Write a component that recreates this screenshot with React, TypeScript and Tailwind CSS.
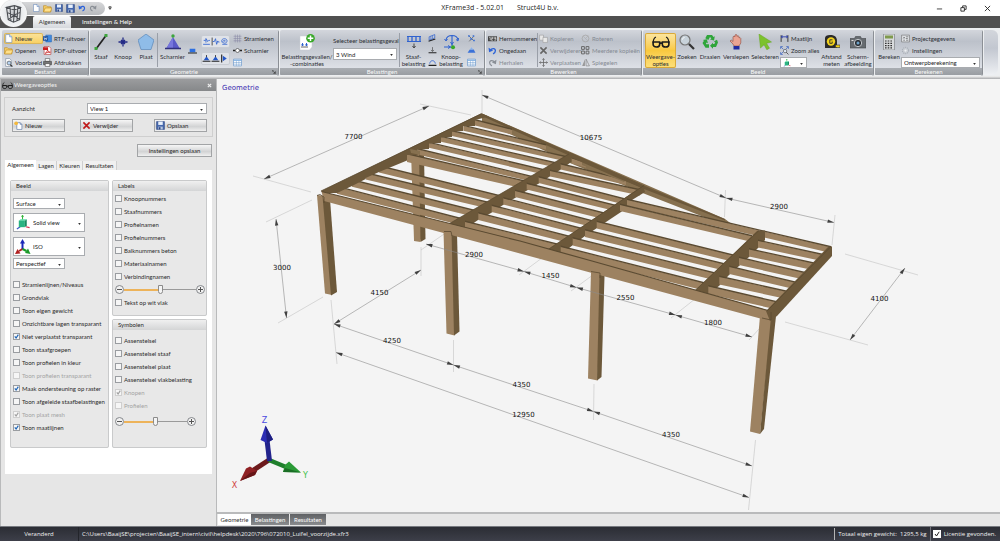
import type { ReactNode } from "react";

type Pt = [number, number];

const pts = (...p: Pt[]) => p.map((q) => q.join(",")).join(" ");

function Icon({ children, className = "h-[10px] w-[10px]" }: { children: ReactNode; className?: string }) {
  return (
    <svg viewBox="0 0 16 16" className={`${className} shrink-0`} fill="none" aria-hidden="true">
      {children}
    </svg>
  );
}

const NewDoc = () => (
  <>
    <path d="M3 1h7l4 4v10H3z" fill="#fff" stroke="#5a7fb5" />
    <path d="M10 1v4h4" fill="#cfe0f5" stroke="#5a7fb5" />
  </>
);
const Folder = () => (
  <>
    <path d="M1 3h5l2 2h6v9H1z" fill="#f7cf6b" stroke="#b98518" />
    <path d="M4 7h12l-3 7H1z" fill="#ffe08a" stroke="#b98518" />
  </>
);
const Disk = () => (
  <>
    <path d="M1 1h14v14H1z" fill="#4668ad" stroke="#2d4680" />
    <path d="M4 1h8v6H4z" fill="#e8f0fb" />
    <path d="M4 10h8v5H4z" fill="#b8c6de" />
    <path d="M5 11h3v4H5z" fill="#2d4680" />
  </>
);
const Undo = () => (
  <>
    <path d="M4 8C7 3 14 4 13 9c0 2-2 4-4 5" stroke="#2c62d8" strokeWidth="2.4" />
    <path d="M1 3l1 8 7-3z" fill="#2c62d8" />
  </>
);
const Redo = () => (
  <>
    <path d="M12 8C9 3 2 4 3 9c0 2 2 4 4 5" stroke="#8a8f96" strokeWidth="2.2" />
    <path d="M15 3l-1 8-7-3z" fill="#8a8f96" />
  </>
);
const Word = () => (
  <>
    <path d="M5 2h10v12H5z" fill="#3f8be0" stroke="#2566b5" />
    <path d="M0 4h9v8H0z" fill="#1c4f9c" />
    <path d="M2 6l1 4 1.500-3L6 10l1-4" stroke="#fff" />
  </>
);
const Pdf = () => (
  <>
    <path d="M2 1h9l3 3v11H2z" fill="#fff" stroke="#b02020" />
    <path d="M0 2h9v5H0z" fill="#c92020" />
    <path d="M4 13c3-2 4-5 4-6 1 3 3 4 5 4-4 0-7 1-9 2z" stroke="#c92020" strokeWidth="1.500" />
  </>
);
const Preview = () => (
  <>
    <path d="M3 1h7l3 3v11H3z" fill="#fff" stroke="#6b7c93" />
    <circle cx="9" cy="9" r="3.500" fill="#b7d4f2" stroke="#333" />
    <path d="M11 12l4 3" stroke="#333" strokeWidth="2" />
  </>
);
const Printer = () => (
  <>
    <path d="M4 1h8v5H4z" fill="#fff" stroke="#444" />
    <path d="M1 6h14v6H1z" fill="#777" stroke="#333" />
    <path d="M4 10h8v5H4z" fill="#fff" stroke="#444" />
  </>
);
const BarMember = () => (
  <>
    <path d="M3 15L13 1.500" stroke="#222" strokeWidth="1.700" />
    <path d="M1.500 13h3v3h-3zM11.500 0h3v3h-3z" fill="#3da53d" />
  </>
);
const Node = () => <path d="M8 3.500v9M3.500 8h9M6 6l4 4M10 6l-4 4" stroke="#232a86" strokeWidth="1.300" />;
const Plate = () => <path d="M8 0l8 6-3 9.500H3L0 6z" fill="#8fbce8" stroke="#5c88b8" strokeWidth=".7" />;
const Hinge = () => (
  <>
    <path d="M8 3L1.500 14h13z" fill="#5a5ac8" />
    <path d="M8 3v11H1.500z" fill="#7676dd" />
    <path d="M0 14.500h16" stroke="#30307c" strokeWidth="1.500" />
    <circle cx="8" cy="2" r="1.700" fill="#3da53d" />
  </>
);
const Support = () => (
  <>
    <path d="M3 5h10v6H3z" fill="#2d6fe0" />
    <path d="M0 12.500h16" stroke="#222" strokeWidth="1.800" />
  </>
);
const Spring = () => <path d="M2 13h12M7 2v8M3 6h3l2-2 2 4 2-2h2" stroke="#2f62cf" strokeWidth="1.500" />;
const Spring2 = () => (
  <>
    <path d="M2 1v14" stroke="#333" strokeWidth="1.500" />
    <path d="M3 8h3l2-5 2 10 2-6 1 2h2" stroke="#2f62cf" strokeWidth="1.500" />
  </>
);
const Spiral = () => (
  <path d="M13 13H4M8 8c2 0 2-2 0-2-4 0-4 5 0 5 6 0 6-8 0-8C3 3 2 7 4 10" stroke="#2f62cf" strokeWidth="1.400" />
);
const TriSupport = () => (
  <>
    <path d="M8 4l5 7H3z" fill="#2256c8" />
    <path d="M1 13h14M8 2v3" stroke="#222" strokeWidth="1.800" />
  </>
);
const SideSupport = () => (
  <>
    <path d="M3 1v14" stroke="#222" strokeWidth="2" />
    <path d="M5 3l7 5-7 5z" fill="#2256c8" />
  </>
);
const Grid = () => <path d="M1 4h14M1 8h14M1 12h14M4 1v14M8 1v14M12 1v14" stroke="#8a8aa6" />;
const HingeLine = () => (
  <>
    <path d="M0 8h4M12 8h4" stroke="#222" strokeWidth="3" />
    <circle cx="8" cy="8" r="3.500" fill="#fff" stroke="#222" />
  </>
);
const TableIcon = () => (
  <>
    <path d="M1 2h14v12H1z" fill="#fff" stroke="#4d86c4" />
    <path d="M1 3h14v2H1z" fill="#6fa6de" />
    <path d="M1 8h14M1 11h14M6 5v9M10.500 5v9" stroke="#4d86c4" strokeWidth=".7" />
  </>
);
const LoadCase = () => (
  <>
    <path d="M1 2h12v11l-2.500 3H1z" fill="#fff" stroke="#c8ccd2" strokeWidth=".5" />
    <path d="M3.500 9v3M7.500 9v3M2.500 10.500l1 1.500 1-1.500M6.500 10.500l1 1.500 1-1.500" stroke="#2f62cf" strokeWidth="1" />
    <path d="M2 13h7" stroke="#222" strokeWidth=".7" />
    <circle cx="11.500" cy="4.300" r="4.300" fill="#38a828" />
    <path d="M11.500 1.500v5.600M8.700 4.300h5.600" stroke="#fff" strokeWidth="1.500" />
  </>
);
const LineLoad = () => (
  <>
    <path d="M1 2.500h14M1 7.500h14" stroke="#2f62cf" />
    <path d="M2 2v5M6 2v5M10 2v5M14 2v5" stroke="#2f62cf" strokeWidth="1.300" />
    <path d="M8 9.500v4M6.500 12l1.500 2 1.500-2" stroke="#444" />
  </>
);
const AreaLoad = () => (
  <>
    <path d="M2 5l10-4v6L2 11z" stroke="#2f62cf" strokeWidth="1.300" />
    <path d="M5 4v6M8 3v5" stroke="#2f62cf" />
    <path d="M1 13l12-4" stroke="#222" strokeWidth="2" />
  </>
);
const PointLoad = () => (
  <>
    <path d="M8 2v7M5.500 7L8 10l2.500-3" stroke="#555" strokeWidth="1.300" />
    <path d="M1 12h14" stroke="#222" strokeWidth="2" />
  </>
);
const Moment = () => (
  <>
    <path d="M3 10c1-7 9-7 10 0" stroke="#2f62cf" strokeWidth="1.500" />
    <path d="M1 13h14" stroke="#222" strokeWidth="2" />
  </>
);
const NodeLoad = () => (
  <>
    <path d="M3 6c1-6 11-6 12 0M9 2v10M1 13h7" stroke="#2f62cf" strokeWidth="1.100" />
    <path d="M7.500 8l1.500 2.500 1.500-2.500M15.500 4l-.5 3-2-1.500M1.500 5L3 7l1.500-2M5 11.500L7.500 13 5 14.500" stroke="#2f62cf" />
    <circle cx="10" cy="13.300" r="2" fill="#38a828" />
  </>
);
const Scatter = () => (
  <>
    <path d="M3 3l9 9M12 4L4 13" stroke="#333" />
    <path d="M2 2h3v3H2zM10 2h3v3h-3zM11 10h3v3h-3zM6 7h3v3H6z" fill="#3b72d8" />
  </>
);
const Mass = () => (
  <>
    <path d="M1 12h14l-3-6H5z" fill="#3b72d8" />
    <path d="M8 2l3 4H5z" fill="#87b1ee" />
  </>
);
const Renumber = () => (
  <>
    <path d="M0 4h16v9H0z" fill="#444" />
    <path d="M2 6h2v5M6 6h3v2H6v3h3M11 6h3v5h-3M11 8h3" stroke="#fff" />
  </>
);
const Copy = () => (
  <>
    <path d="M1 2h7v9H1z" fill="#e8e8e8" stroke="#999" />
    <path d="M7 6h8v9H7z" fill="#e8e8e8" stroke="#999" />
  </>
);
const Cross = ({ c }: { c: string }) => <path d="M2.500 2.500l11 11M13.500 2.500l-11 11" stroke={c} strokeWidth="2.800" />;
const Move = () => (
  <path d="M8 1v14M1 8h14M6 3l2-2 2 2M6 13l2 2 2-2M3 6L1 8l2 2M13 6l2 2-2 2" stroke="#666" strokeWidth="1.400" />
);
const Rotate = () => (
  <>
    <circle cx="8" cy="8" r="6" stroke="#aaa" strokeWidth="1.500" />
    <path d="M4 4l8 8M8 8l5-5" stroke="#aaa" />
  </>
);
const Multi = () => <path d="M1 1h5v5H1zM9 1h5v5H9zM1 9h5v5H1zM9 9h5v5H9z" stroke="#666" strokeWidth="1.700" />;
const Mirror = () => (
  <>
    <path d="M7 2v12H2z" fill="#999" />
    <path d="M9 2v12h6z" stroke="#777" />
  </>
);
const Glasses = () => (
  <>
    <path d="M1 9c0-2.500.5-4.500 2.500-5.500M15 9c0-2.500-.5-4.500-2.500-5.500" stroke="#1a1a1a" strokeWidth="1.100" />
    <path d="M1 8h5.800v2.200c0 1.200-1 2.300-2.900 2.300S1 11.400 1 10.200zM9.200 8H15v2.200c0 1.200-1 2.300-2.900 2.300s-2.900-1.100-2.900-2.300zM6.800 9h2.400" stroke="#1a1a1a" strokeWidth="1.400" />
  </>
);
const Magnifier = () => (
  <>
    <circle cx="6" cy="6" r="5" fill="#c8d2da" stroke="#777" strokeWidth="1.200" />
    <path d="M10 10l5 5" stroke="#333" strokeWidth="2.200" />
    <path d="M3.500 5.500c0-1 1-2 2-2" stroke="#fff" />
  </>
);
const Recycle = () => (
  <g fill="#2fa53a">
    <path d="M5 1h5l1.500 2 1.300-.8-.8 4.300-4-1 1.300-.9L8 3 6.300 6 3.300 4.200z" />
    <path d="M12 7.300l3-1.500 1 2.700-2 4.500h-3v1.800L8 11.800l3-3V10h1.300l.9-1.500z" />
    <path d="M7 10.200v3.600H3.500L.5 9 2 6.700.8 6l4-.8L6 9.200 4.600 8.500l-.7 1.200.4.500z" />
  </g>
);
const Hand = () => (
  <>
    <path d="M5 10L2 7l1.200-1L5 7.500V2.800l1-.7L7 2.800V1l1-.6L9 1v1.500l1-.8 1 .8V4l1-.5.8 1v4.500L11 12H6z" fill="#eba493" stroke="#8e4b40" strokeWidth=".6" />
    <path d="M5.500 12h6v3.500h-6z" fill="#232aa0" />
  </>
);
const Cursor = () => <path d="M2 0l12.500 8-5 1.200 3 5-2.700 1.500-2.700-5L3.500 14z" fill="#7cc22e" stroke="#67a722" strokeWidth=".5" />;
const DimLine = () => (
  <>
    <path d="M2 2v12M14 2v12" stroke="#222" strokeWidth="1.500" />
    <path d="M2 5h12M5 3L2 5l3 2M11 3l3 2-3 2" stroke="#2f3fa8" strokeWidth="1.600" />
  </>
);
const ZoomAll = () => (
  <>
    <path d="M2 2l4 4M14 2l-4 4M2 14l4-4M1 5V1h4M11 1h4v4M1 11v4h4" stroke="#3a63c0" strokeWidth="1.300" />
    <circle cx="9" cy="9" r="3" fill="#dce8f5" stroke="#444" />
    <path d="M11 11l4 4" stroke="#444" strokeWidth="1.500" />
  </>
);
const Tape = () => (
  <>
    <path d="M1 4c0-2 2-3 5-3 4 0 7 1.500 7 6v7H1z" fill="#2b2b2b" />
    <circle cx="7" cy="7.500" r="4.200" fill="#f2d21c" />
    <path d="M8.500 5.800H5.800v3.500h2.400V7.500" stroke="#2b2b2b" strokeWidth=".9" />
    <path d="M11.500 11h4.500v2.500h-4.500z" fill="#f2d21c" stroke="#333" strokeWidth=".6" />
  </>
);
const Camera = () => (
  <>
    <path d="M0 4.500h4.500l1-2h5l1 2H16V14H0z" fill="#666b70" stroke="#44484c" strokeWidth=".6" />
    <circle cx="8" cy="9" r="3.700" fill="#2c3035" stroke="#c4c8cc" />
    <circle cx="8" cy="9" r="1.500" fill="#6da2c9" />
    <path d="M1.500 6.500h2" stroke="#ddd" />
  </>
);
const Calc = () => (
  <>
    <path d="M2.500 0h11v16h-11z" fill="#d8dadc" stroke="#8c8f93" strokeWidth=".8" />
    <path d="M4 1.500h8v3H4z" fill="#7f9a4e" />
    <path d="M4 7h8M4 9.300h8M4 11.600h8M4 13.900h8" stroke="#333" strokeWidth="1.200" strokeDasharray="1.600 1.100" />
  </>
);
const Settings = () => (
  <>
    <circle cx="8" cy="8" r="5.500" fill="#c9cdd3" stroke="#aab0b8" strokeWidth="2" strokeDasharray="2 1.500" />
    <circle cx="8" cy="8" r="2" fill="#eef0f3" />
  </>
);
const Project = () => (
  <>
    <path d="M1 2h14v12H1z" fill="#e3e6ea" stroke="#666" />
    <path d="M4 5l3 3M4 8l3-3M4 11h3M9 5h4M9 8h3M9 11h4" stroke="#555" strokeWidth="1.200" />
  </>
);
const Cube = () => (
  <>
    <path d="M5 12.500l-3.500 2.500" stroke="#3b55c8" strokeWidth="1.200" />
    <path d="M7.500 5V.5M6.500 2l1-1.500 1 1.500" stroke="#37b43c" strokeWidth="1.100" />
    <path d="M11 12.500l4 1" stroke="#d02c4c" strokeWidth="1.200" />
    <path d="M3.500 6l2-1.500H12l-2 1.500z" fill="#5adba6" />
    <path d="M3.500 6H10v7H3.500z" fill="#2bb382" />
    <path d="M10 6l2-1.500V11l-2 2z" fill="#1b8a62" />
  </>
);
const IsoAxes = () => (
  <>
    <path d="M7.500 10V4" stroke="#1c28b8" strokeWidth="2" />
    <path d="M7.500 0L5 4.500h5z" fill="#1c28b8" />
    <path d="M7.500 10l-3.500 2" stroke="#b02020" strokeWidth="2" />
    <path d="M0 15l2.500-5 3 4.500z" fill="#b02020" />
    <path d="M7.500 10l4 2" stroke="#1d9a2a" strokeWidth="2" />
    <path d="M15.500 15l-5.500-1 3-4.500z" fill="#1d9a2a" />
  </>
);
const NewStar = () => (
  <>
    <path d="M5 3h6l3 3v9H5z" fill="#fff" stroke="#48679c" />
    <path d="M11 3v3h3" stroke="#48679c" />
    <circle cx="3.800" cy="4" r="3.300" fill="#f5b93c" />
  </>
);

function Caret({ className = "" }: { className?: string }) {
  return (
    <svg viewBox="0 0 4 3" className={`pointer-events-none absolute h-[2px] w-[3px] ${className}`} aria-hidden="true">
      <path d="M0 0h4L2 3z" fill="#333" />
    </svg>
  );
}

function Select({ label, value, className, icon }: { label: string; value: string; className: string; icon?: ReactNode }) {
  return (
    <div className={`relative flex items-center border border-[#a9acb0] bg-white ${className}`}>
      {icon}
      <select aria-label={label} className="h-full w-full min-w-0 appearance-none bg-transparent pl-[2px] text-[#222] outline-none">
        <option>{value}</option>
      </select>
      <Caret className="right-[3px] top-1/2" />
    </div>
  );
}

function Small({ icon, label, disabled, active }: { icon: ReactNode; label: string; disabled?: boolean; active?: boolean }) {
  return (
    <button
      type="button"
      disabled={disabled}
      className={`flex h-[11px] items-center gap-[2px] whitespace-nowrap ${
        active ? "rounded-xs bg-linear-to-b from-[#fbe49c] to-[#f8cf5e] ring-1 ring-[#dcb65a] ring-inset" : ""
      } ${disabled ? "text-[#858a93]" : "text-[#2b2e33]"}`}
    >
      <Icon className="h-[9px] w-[9px]">{icon}</Icon>
      {label}
    </button>
  );
}

function Tiny({ icon, label }: { icon: ReactNode; label: string }) {
  return (
    <button type="button" aria-label={label} className="flex h-[11px] items-center justify-center">
      <Icon className="h-[9px] w-[9px]">{icon}</Icon>
    </button>
  );
}

function Big({ icon, lines, width, active }: { icon: ReactNode; lines: string[]; width: string; active?: boolean }) {
  return (
    <button
      type="button"
      className={`flex h-[35px] shrink-0 flex-col items-center text-center leading-[7px] whitespace-nowrap text-[#2b2e33] ${width} ${
        active ? "rounded-xs bg-linear-to-b from-[#fbe6a0] via-[#f9c93f] to-[#fde07a] ring-1 ring-[#d9a93a] ring-inset" : ""
      }`}
    >
      <Icon className={active ? "mb-[2px] h-[18px] w-[18px]" : "mt-px mb-[3px] h-[16px] w-[16px]"}>{icon}</Icon>
      {lines.map((l) => (
        <span key={l}>{l}</span>
      ))}
    </button>
  );
}

function Group({ title, width, children, launcher }: { title: string; width: string; children: ReactNode; launcher?: boolean }) {
  return (
    <section className={`flex shrink-0 flex-col overflow-hidden rounded-xs border-r border-[#8b8f95] ${width}`}>
      <div className="flex h-[38px] items-start bg-linear-to-b from-[#d3d6dc] via-[#bcc1ca] via-30% to-[#dde0e6] px-[2px] pt-[3px]">{children}</div>
      <div className="relative flex h-[7px] items-center justify-center bg-linear-to-b from-[#a9adb2] to-[#999da2] text-[#fafafa]">
        {title}
        {launcher && (
          <svg viewBox="0 0 6 6" className="absolute right-[2px] h-[4px] w-[4px]" aria-hidden="true">
            <path d="M0 0h3M0 0v3M2 2l3 3M5 2v3H2" stroke="#333" fill="none" />
          </svg>
        )}
      </div>
    </section>
  );
}

const Divider = () => <div className="mx-px h-[34px] w-px shrink-0 bg-[#9a9fa8]" />;
const Col = ({ children, width = "" }: { children: ReactNode; width?: string }) => <div className={`flex shrink-0 flex-col gap-px ${width}`}>{children}</div>;

function Ribbon() {
  return (
    <div className="flex h-[48px] gap-px bg-[#eceef0] px-[2px] pt-[2px] text-[6px]/[7px]">
      <Group title="Bestand" width="w-[87px]">
        <Col width="w-[39px]">
          <Small icon={<NewDoc />} label="Nieuw" active />
          <Small icon={<Folder />} label="Openen" />
          <Small icon={<Preview />} label="Voorbeeld" />
        </Col>
        <Col>
          <Small icon={<Word />} label="RTF-uitvoer" />
          <Small icon={<Pdf />} label="PDF-uitvoer" />
          <Small icon={<Printer />} label="Afdrukken" />
        </Col>
      </Group>
      <Group title="Geometrie" width="w-[189px]" launcher>
        <Big icon={<BarMember />} lines={["Staaf"]} width="w-[18px]" />
        <Big icon={<Node />} lines={["Knoop"]} width="w-[26px]" />
        <Big icon={<Plate />} lines={["Plaat"]} width="w-[20px]" />
        <Divider />
        <Big icon={<Hinge />} lines={["Scharnier"]} width="w-[27px]" />
        <div className="flex h-[35px] w-[12px] shrink-0 items-center justify-center">
          <Tiny icon={<Support />} label="Oplegging" />
        </div>
        <div className="mx-[3px] flex h-[34px] flex-col justify-between py-[2px]">
          <div className="flex rounded-xs border border-[#c8ccd3] bg-[#dfe2e8]">
            <Tiny icon={<Spring />} label="Veer" />
            <Tiny icon={<Spring2 />} label="Veer horizontaal" />
            <Tiny icon={<Spiral />} label="Rotatieveer" />
          </div>
          <div className="flex rounded-xs border border-[#c8ccd3] bg-[#dfe2e8]">
            <Tiny icon={<TriSupport />} label="Vast" />
            <Tiny icon={<TriSupport />} label="Rol" />
            <Tiny icon={<SideSupport />} label="Zijdelings" />
          </div>
        </div>
        <Col>
          <Small icon={<Grid />} label="Stramienen" />
          <Small icon={<HingeLine />} label="Scharnier" />
          <Small icon={<TableIcon />} label="" />
        </Col>
      </Group>
      <Group title="Belastingen" width="w-[205px]" launcher>
        <Big icon={<LoadCase />} lines={["Belastingsgevallen/", "-combinaties"]} width="w-[50px]" />
        <div className="flex w-[66px] shrink-0 flex-col gap-[4px] px-px pt-[4px] text-[#2b2e33]">
          <span className="whitespace-nowrap">Selecteer belastingsgeval</span>
          <Select label="Selecteer belastingsgeval" value="3 Wind" className="h-[12px]" />
        </div>
        <Divider />
        <Big icon={<LineLoad />} lines={["Staaf-", "belasting"]} width="w-[25px]" />
        <Col width="w-[12px]">
          <Tiny icon={<AreaLoad />} label="Vlaklast" />
          <Tiny icon={<PointLoad />} label="Puntlast" />
          <Tiny icon={<Moment />} label="Moment" />
        </Col>
        <Big icon={<NodeLoad />} lines={["Knoop-", "belasting"]} width="w-[26px]" />
        <Col width="w-[14px]">
          <Tiny icon={<Scatter />} label="Verdeling" />
          <Tiny icon={<Mass />} label="Massa" />
          <Tiny icon={<TableIcon />} label="Tabel" />
        </Col>
      </Group>
      <Group title="Bewerken" width="w-[156px]">
        <Col width="w-[48px]">
          <Small icon={<Renumber />} label="Hernummeren" />
          <Small icon={<Undo />} label="Ongedaan" />
          <Small icon={<Redo />} label="Herhalen" disabled />
        </Col>
        <Divider />
        <Col width="w-[42px]">
          <Small icon={<Copy />} label="Kopieren" disabled />
          <Small icon={<Cross c="#666" />} label="Verwijderen" disabled />
          <Small icon={<Move />} label="Verplaatsen" disabled />
        </Col>
        <Col>
          <Small icon={<Rotate />} label="Roteren" disabled />
          <Small icon={<Multi />} label="Meerdere kopieën" disabled />
          <Small icon={<Mirror />} label="Spiegelen" disabled />
        </Col>
      </Group>
      <Group title="Beeld" width="w-[231px]">
        <Big icon={<Glasses />} lines={["Weergave-", "opties"]} width="w-[31px]" active />
        <Big icon={<Magnifier />} lines={["Zoeken"]} width="w-[22px]" />
        <Big icon={<Recycle />} lines={["Draaien"]} width="w-[24px]" />
        <Big icon={<Hand />} lines={["Verslepen"]} width="w-[28px]" />
        <Big icon={<Cursor />} lines={["Selecteren"]} width="w-[30px]" />
        <Col width="w-[39px]">
          <Small icon={<DimLine />} label="Maatlijn" />
          <Small icon={<ZoomAll />} label="Zoom alles" />
          <Select
            label="Aanzichtrichting"
            value=""
            className="h-[11px] w-[27px]"
            icon={
              <Icon className="ml-[2px] h-[8px] w-[8px]">
                <Cube />
              </Icon>
            }
          />
        </Col>
        <Big icon={<Tape />} lines={["Afstand", "meten"]} width="w-[25px]" />
        <Big icon={<Camera />} lines={["Scherm-", "afbeelding"]} width="w-[28px]" />
      </Group>
      <Group title="Berekenen" width="w-[108px]">
        <Big icon={<Calc />} lines={["Bereken"]} width="w-[24px]" />
        <Col width="w-[79px]">
          <Small icon={<Project />} label="Projectgegevens" />
          <Small icon={<Settings />} label="Instellingen" />
          <Select label="Berekeningstype" value="Ontwerpberekening" className="h-[11px]" />
        </Col>
      </Group>
      <div className="mb-px flex-1 rounded-r-md bg-linear-to-b from-[#d3d6dc] via-[#c2c7d0] via-40% to-[#eef0f3]" />
    </div>
  );
}

function TitleBar() {
  return (
    <header className="relative bg-white">
      <div className="flex h-[16px] items-center justify-between">
        <div className="flex flex-1 items-center pl-[9px]">
          <div className="ml-[13px] flex h-[13px] w-[83px] items-center gap-[3px] rounded-r-full bg-linear-to-b from-[#d6d7d9] to-[#b9bbbe] pl-[10px]">
            <Icon className="h-[8px] w-[8px]"><NewDoc /></Icon>
            <Icon className="h-[9px] w-[9px]"><Folder /></Icon>
            <Icon className="h-[8px] w-[8px]"><Disk /></Icon>
            <Icon className="h-[9px] w-[9px]"><Disk /></Icon>
            <Icon className="h-[8px] w-[8px]"><Undo /></Icon>
            <Icon className="h-[8px] w-[8px]"><Redo /></Icon>
          </div>
          <svg viewBox="0 0 6 6" className="ml-[3px] h-[4px] w-[4px]" aria-hidden="true">
            <path d="M1 0h4v1H1zM0 2h6L3 6z" fill="#555" />
          </svg>
        </div>
        <h1 className="flex gap-[13px] font-['Open_Sans',sans-serif] text-[7px] text-[#222]">
          <span>XFrame3d - 5.02.01</span>
          <span>Struct4U b.v.</span>
        </h1>
        <div className="flex flex-1 items-center justify-end gap-[17px] pr-[9px]">
          <button type="button" aria-label="Minimaliseren">
            <svg viewBox="0 0 8 8" className="h-[7px] w-[7px]"><path d="M1 4.500h6" stroke="#333" /></svg>
          </button>
          <button type="button" aria-label="Herstellen">
            <svg viewBox="0 0 8 8" className="h-[7px] w-[7px]" fill="none" stroke="#222"><path d="M1 3h4v4H1zM3 3V1h4v4H5" /></svg>
          </button>
          <button type="button" aria-label="Sluiten">
            <svg viewBox="0 0 8 8" className="h-[7px] w-[7px]"><path d="M1 1l6 6M7 1L1 7" stroke="#222" /></svg>
          </button>
        </div>
      </div>
      <nav className="flex h-[12px] items-end bg-[#505050] pl-[33px] text-[6px]/[11px]">
        <a href="#algemeen" className="h-[12px] w-[38px] rounded-t-xs bg-linear-to-b from-[#fbfbfb] to-[#d5d8dd] text-center text-[#333]">Algemeen</a>
        <a href="#instellingen" className="ml-[11px] h-[12px] text-white">Instellingen &amp; Help</a>
      </nav>
      <button type="button" aria-label="Menu" className="absolute top-0 left-0 flex size-[27px] items-center justify-center rounded-full bg-radial from-[#c4c7cb] via-[#eceef0] to-white shadow-[0_0_1px_#999]">
        <svg viewBox="0 0 24 24" className="size-[21px]" fill="none" stroke="#4a4d52" strokeWidth="1.200">
          <path d="M4 5l9-2 7 2-7 3zM4 5l2 14 6 3 7-3 1-14M13 8l-1 14M13 3v11M5 11l7 3 7-3M6 19l7-5 6 5M8 4l1 16M17 4l-1 16" />
        </svg>
      </button>
    </header>
  );
}

function Check({ label, checked, disabled }: { label: string; checked?: boolean; disabled?: boolean }) {
  return (
    <label className={`flex h-[13px] items-center gap-[2px] whitespace-nowrap ${disabled ? "text-[#a4a4a4]" : "text-[#2b2b2b]"}`}>
      <span className="relative flex size-[7px] shrink-0">
        <input
          type="checkbox"
          defaultChecked={checked}
          disabled={disabled}
          className={`peer size-[7px] appearance-none border bg-[#f6f6f6] ${disabled ? "border-[#cfcfcf]" : "border-[#9a9da1]"}`}
        />
        <svg viewBox="0 0 7 7" className="pointer-events-none absolute inset-0 hidden size-[7px] peer-checked:block" fill="none" aria-hidden="true">
          <path d="M1.800 3.300l1.300 1.700 2.200-3.400" stroke={disabled ? "#a0a0a0" : "#1f66b8"} strokeWidth="1.200" />
        </svg>
      </span>
      {label}
    </label>
  );
}

function ZoomSlider({ label, value, width }: { label: string; value: number; width: string }) {
  const ring = "flex size-[9px] shrink-0 items-center justify-center rounded-full border border-[#85888c] bg-[#f1f1f1]";
  return (
    <div className={`flex h-[13px] items-center ${width}`}>
      <button type="button" aria-label={`${label} kleiner`} className={ring}>
        <svg viewBox="0 0 5 5" className="size-[5px]"><path d="M0 2.500h5" stroke="#555" /></svg>
      </button>
      <div className="relative flex h-[9px] min-w-0 flex-1 items-center">
        <div className="h-px w-full bg-[#9a9a9a]" />
        <div className="absolute left-0 h-[2px] bg-[#edb35a]" style={{ width: `${value}%` }} />
        <input
          type="range"
          aria-label={label}
          defaultValue={value}
          className="absolute inset-0 m-0 h-[9px] w-full appearance-none bg-transparent [&::-webkit-slider-thumb]:h-[9px] [&::-webkit-slider-thumb]:w-[5px] [&::-webkit-slider-thumb]:appearance-none [&::-webkit-slider-thumb]:rounded-xs [&::-webkit-slider-thumb]:rounded-b-full [&::-webkit-slider-thumb]:border [&::-webkit-slider-thumb]:border-[#8b8b8b] [&::-webkit-slider-thumb]:bg-[#f4f4f4]"
        />
      </div>
      <button type="button" aria-label={`${label} groter`} className={ring}>
        <svg viewBox="0 0 5 5" className="size-[5px]"><path d="M0 2.500h5M2.500 0v5" stroke="#555" /></svg>
      </button>
    </div>
  );
}

function PanelButton({ icon, label, width }: { icon?: ReactNode; label: string; width: string }) {
  return (
    <button
      type="button"
      className={`flex h-[13px] items-center border border-[#a2a4a6] bg-linear-to-b from-[#f6f6f6] via-[#d2d3d4] via-60% to-[#f0f0f0] text-[#2b2b2b] ${icon ? "gap-[2px] pl-px" : "justify-center"} ${width}`}
    >
      {icon && <Icon className="h-[9px] w-[9px]">{icon}</Icon>}
      {label}
    </button>
  );
}

function Box({ title, children, className = "" }: { title: string; children: ReactNode; className?: string }) {
  return (
    <fieldset className={`flex min-w-0 flex-col rounded-xs border border-[#c9cacb] bg-[#e8e8e8] ${className}`}>
      <div className="h-[10px] shrink-0 bg-linear-to-b from-[#f0f0f0] to-[#d4d5d6] pl-[5px] leading-[10px] text-[#2b2b2b]">{title}</div>
      {children}
    </fieldset>
  );
}

const viewChecks = [
  { label: "Stramienlijnen/Niveaus" },
  { label: "Grondvlak" },
  { label: "Toon eigen gewicht" },
  { label: "Onzichtbare lagen transparant" },
  { label: "Niet verplaatst transparant", checked: true },
  { label: "Toon staafgroepen" },
  { label: "Toon profielen in kleur" },
  { label: "Toon profielen transparant", disabled: true },
  { label: "Maak ondersteuning op raster", checked: true },
  { label: "Toon afgeleide staafbelastingen" },
  { label: "Toon plaat mesh", checked: true, disabled: true },
  { label: "Toon maatlijnen", checked: true },
];
const labelChecks = ["Knoopnummers", "Staafnummers", "Profielnamen", "Profielnummers", "Balknummers beton", "Materiaalnamen", "Verbindingnamen"];
const symbolChecks = [
  { label: "Assenstelsel" },
  { label: "Assenstelsel staaf" },
  { label: "Assenstelsel plaat" },
  { label: "Assenstelsel vlakbelasting" },
  { label: "Knopen", checked: true, disabled: true },
  { label: "Profielen", disabled: true },
];

function SidePanel() {
  return (
    <aside className="flex w-[217px] shrink-0 flex-col border-x border-[#b9babb] bg-[#e6e6e6] text-[6px]/[8px]">
      <div className="flex h-[12px] shrink-0 items-center gap-px bg-linear-to-b from-[#9b9c9e] to-[#86888a] px-px pr-[4px] text-[#f2f2f2]">
        <Icon className="h-[11px] w-[11px]"><Glasses /></Icon>
        <h2 className="flex-1">Weergaveopties</h2>
        <button type="button" aria-label="Paneel sluiten" className="flex">
          <svg viewBox="0 0 6 6" className="size-[5px]"><path d="M1 1l4 4M5 1L1 5" stroke="#eee" strokeWidth="1.400" /></svg>
        </button>
      </div>
      <div className="mx-[3px] mt-[6px] flex h-[40px] shrink-0 flex-col gap-[5px] border border-[#cfcfcf] px-[5px] pt-[5px]">
        <div className="flex items-center gap-[2px] pl-[2px]">
          <span className="w-[73px] text-[#2b2b2b]">Aanzicht</span>
          <Select label="Aanzicht" value="View 1" className="h-[11px] flex-1" />
        </div>
        <div className="flex justify-between pl-[2px]">
          <div className="flex gap-[15px]">
            <PanelButton icon={<NewStar />} label="Nieuw" width="w-[53px]" />
            <PanelButton icon={<Cross c="#c01818" />} label="Verwijder" width="w-[53px]" />
          </div>
          <PanelButton icon={<Disk />} label="Opslaan" width="w-[53px]" />
        </div>
      </div>
      <div className="mt-[7px] flex justify-end pr-[4px]">
        <PanelButton label="Instellingen opslaan" width="w-[75px]" />
      </div>
      <div role="tablist" className="mt-[3px] ml-[4px] flex h-[10px] shrink-0 items-end text-[#2b2b2b]">
        <button type="button" role="tab" aria-selected="true" className="h-[10px] w-[31px] bg-white">Algemeen</button>
        <button type="button" role="tab" className="h-[9px] w-[21px] border-r border-[#cfcfcf] bg-[#f0f0f0]">Lagen</button>
        <button type="button" role="tab" className="h-[9px] w-[26px] border-r border-[#cfcfcf] bg-[#f0f0f0]">Kleuren</button>
        <button type="button" role="tab" className="h-[9px] w-[34px] border-r border-[#cfcfcf] bg-[#f0f0f0]">Resultaten</button>
      </div>
      <div className="mx-[4px] flex gap-[3px] bg-white px-[5px] pt-[10px] pb-[26px]">
        <Box title="Beeld" className="w-[99px] shrink-0">
          <div className="flex flex-col items-start px-[2px] pt-[7px] pb-[13px]">
            <Select label="Weergave" value="Surface" className="h-[11px] w-[52px]" />
            <Select label="Model" value="Solid view" className="mt-[4px] h-[19px] w-[72px]" icon={<Icon className="ml-px h-[15px] w-[16px]"><Cube /></Icon>} />
            <Select label="Richting" value="ISO" className="mt-[5px] h-[19px] w-[72px]" icon={<Icon className="ml-px h-[16px] w-[16px]"><IsoAxes /></Icon>} />
            <Select label="Projectie" value="Perspectief" className="mt-[2px] mb-[9px] h-[11px] w-[52px]" />
            {viewChecks.map((c) => (
              <Check key={c.label} {...c} />
            ))}
          </div>
        </Box>
        <div className="flex min-w-0 flex-1 flex-col gap-[3px]">
          <Box title="Labels">
            <div className="px-[2px] pt-px pb-[6px]">
              {labelChecks.map((l) => (
                <Check key={l} label={l} />
              ))}
              <ZoomSlider label="Labelgrootte" value={50} width="w-[90px]" />
              <Check label="Tekst op wit vlak" />
            </div>
          </Box>
          <Box title="Symbolen" className="flex-1">
            <div className="px-[2px] pt-[4px]">
              {symbolChecks.map((c) => (
                <Check key={c.label} {...c} />
              ))}
              <div className="pt-[3px]">
                <ZoomSlider label="Symboolgrootte" value={50} width="w-[81px]" />
              </div>
            </div>
          </Box>
        </div>
      </div>
    </aside>
  );
}

const LIGHT = "#9d8261";
const MID = "#86704f";
const DARK = "#6c583a";
const EDGE = "#5a4a31";

function Joist({ a, b, h }: { a: Pt; b: Pt; h: number }) {
  return (
    <>
      <polygon points={pts(a, b, [b[0], b[1] + h + 1], [a[0], a[1] + h + 1.500])} fill={LIGHT} />
      <polygon points={pts([a[0], a[1] - 0.9], [b[0], b[1] - 0.9], [b[0], b[1] + 0.4], [a[0], a[1] + 0.4])} fill={EDGE} />
    </>
  );
}

function Dim({ a, b, text, at }: { a: Pt; b: Pt; text: string; at: Pt }) {
  const len = Math.hypot(b[0] - a[0], b[1] - a[1]);
  const u: Pt = [(b[0] - a[0]) / len, (b[1] - a[1]) / len];
  const head = (p: Pt, s: number) =>
    pts(p, [p[0] + s * u[0] * 6.500 - u[1] * 1.700, p[1] + s * u[1] * 6.500 + u[0] * 1.700], [p[0] + s * u[0] * 6.500 + u[1] * 1.700, p[1] + s * u[1] * 6.500 - u[0] * 1.700]);
  return (
    <g>
      <line x1={a[0]} y1={a[1]} x2={b[0]} y2={b[1]} stroke="#8c8c8c" strokeWidth=".6" />
      <polygon points={head(a, 1)} fill="#404040" />
      <polygon points={head(b, -1)} fill="#404040" />
      <text x={at[0]} y={at[1] + 2.500} textAnchor="middle" fontSize="7" fill="#111">
        {text}
      </text>
    </g>
  );
}

const leftJoists: { a: Pt; b: Pt; h: number }[] = [
  { a: [475, 120], b: [512, 129.500], h: 4 },
  { a: [463.300, 125.700], b: [546, 145], h: 3.500 },
  { a: [452, 131], b: [571, 158], h: 3.500 },
  { a: [441, 136.700], b: [560, 164], h: 3.500 },
  { a: [429, 142.700], b: [548, 171], h: 3.500 },
  { a: [417.700, 149], b: [537, 178], h: 4 },
  { a: [407, 154], b: [528, 182], h: 6.500 },
  { a: [379, 166], b: [502, 196.500], h: 5 },
  { a: [365.700, 173], b: [490, 203], h: 5 },
  { a: [352, 180], b: [476, 211], h: 5.200 },
  { a: [337, 186.700], b: [462, 219], h: 5.500 },
];
const midJoists: { a: Pt; b: Pt; h: number }[] = [
  { a: [571.700, 158], b: [586, 162.500], h: 4 },
  { a: [560.700, 164], b: [626, 180], h: 4 },
  { a: [550, 170.500], b: [640, 190], h: 4.500 },
  { a: [538.700, 177], b: [628, 200], h: 4.500 },
  { a: [526.700, 183.500], b: [617, 206], h: 4.500 },
  { a: [515, 190.500], b: [605, 213.500], h: 5 },
  { a: [503.300, 198], b: [594, 221.500], h: 5 },
  { a: [491.700, 205.500], b: [583, 229], h: 5 },
  { a: [478.300, 213], b: [571, 237], h: 5.500 },
  { a: [465, 221.500], b: [560, 245], h: 6 },
];
const rightJoists: { a: Pt; b: Pt; h: number }[] = [
  { a: [620, 204.500], b: [752, 236], h: 5 },
  { a: [596.700, 221.500], b: [734, 255.500], h: 5.500 },
  { a: [585, 230], b: [724, 264], h: 5.500 },
  { a: [572.700, 238], b: [714, 273], h: 6 },
  { a: [560.700, 246.500], b: [704, 283], h: 6.500 },
];
const endJoists: { a: Pt; b: Pt; h: number }[] = [
  { a: [758, 240.500], b: [822, 254.500], h: 5.500 },
  { a: [749, 249], b: [815, 263.500], h: 6 },
  { a: [739, 257.500], b: [806, 273], h: 6 },
  { a: [729.300, 266.500], b: [798, 283], h: 6 },
  { a: [719.300, 276.500], b: [789, 292], h: 6.500 },
  { a: [708.300, 286], b: [779, 302.500], h: 6.500 },
];
const extensions: [Pt, Pt][] = [
  [[253, 176], [311, 192]],
  [[420, 104], [471, 115]],
  [[482, 88], [482, 113]],
  [[725.500, 190], [724.500, 217]],
  [[835, 215], [832, 245]],
  [[845, 254], [918, 275]],
  [[785, 322], [868, 345]],
  [[266, 222], [312, 200]],
  [[278, 323], [323, 297]],
  [[421, 247], [421, 276]],
  [[331, 300], [337, 364]],
  [[453.500, 340], [453.500, 372]],
  [[594, 384], [593.500, 420]],
  [[755.500, 440], [748.500, 510]],
  [[421, 250], [447, 232]],
  [[519, 275], [546, 255]],
  [[571, 291], [597, 272]],
  [[671, 318], [700, 295]],
  [[749, 340], [771, 316]],
];

function Viewport() {
  return (
    <svg viewBox="217 90 783 422" preserveAspectRatio="xMinYMin meet" className="w-full" role="img" aria-label="3D-model van de luifel" fontFamily="'DejaVu Sans', sans-serif">
      {extensions.map(([a, b]) => (
        <line key={a.join()} x1={a[0]} y1={a[1]} x2={b[0]} y2={b[1]} stroke="#c2c2c2" strokeWidth=".6" />
      ))}

      <polygon points="411,152 422,155 422,241 414,240" fill={LIGHT} />
      <polygon points="419,152 424,153 425.500,239 420.500,242" fill={DARK} />
      <polygon points="414,240 420.500,239 420.500,242 414,241" fill={LIGHT} />

      <polygon points="317,195 325,196 332,295 325,293.500" fill={LIGHT} />
      <polygon points="322.500,196 330,199 337,292 331,295.500" fill={DARK} />
      <polygon points="443.500,231 453,232 454.500,335.500 446.500,333.500" fill={LIGHT} />
      <polygon points="451.500,231 457,233 459.500,331.500 454,335.500" fill={DARK} />
      <polygon points="591,272 601,274 597.500,380.500 588,378.500" fill={LIGHT} />
      <polygon points="599.500,274 604.500,276 601.500,377 597,380.500" fill={DARK} />
      <polygon points="760,316 772,318 760,434 750,431.500" fill={LIGHT} />
      <polygon points="771,317 776,316 764,429 760,434" fill={DARK} />

      <polygon points="482,113.500 725,219 731,223.500 718,222.500 640,192 570,163 512,135 482,122" fill={MID} />
      <polygon points="482,113.500 570,152.500 645,186 725,219 725,220.500 644,189 570,156 482,116" fill={DARK} />

      {leftJoists.map((j) => (
        <Joist key={j.a.join()} {...j} />
      ))}
      <polygon points="321,191 481,113.500 489,116.500 475,120 475,126 463,126 463,131 452,131.500 452,137 441,137.500 441,143 429,143.500 429,149 417.700,149.500 417.700,155 407,155 407,160.500 379,172 379,166.500 379,172 365.700,178 365.700,173 365.700,179 352,186 352,180 352,186 337,193 337,188 337,193 324,193" fill={DARK} />
      <line x1="321" y1="191" x2="482" y2="113.500" stroke={EDGE} strokeWidth=".8" />
      <polygon points="410,149 420,151 420,155 411,153" fill={MID} />

      <polygon points="447,225 567,155 574,154 574,160 560,170 549,177 538,184 526,191 515,198 503,205 491,213 478,220 465,229 461,231 447,229" fill={DARK} />
      <line x1="447" y1="225" x2="569" y2="154" stroke={EDGE} strokeWidth=".7" />
      {midJoists.map((j) => (
        <Joist key={j.a.join()} {...j} />
      ))}
      <polygon points="582,160.500 626,180 624,182 582,165" fill={MID} />
      <polygon points="570,152.500 645,186 645,189 620,179 570,157" fill={DARK} />

      <polygon points="545,251.500 643,185.500 645,192 632,200 627,208 597,228 585,236 573,245 561,254 556,256 545,253" fill={DARK} />
      <line x1="545" y1="251.500" x2="644" y2="185.500" stroke={EDGE} strokeWidth=".7" />
      <Joist a={[627, 199.500]} b={[831, 247]} h={5} />
      {rightJoists.map((j) => (
        <Joist key={j.a.join()} {...j} />
      ))}

      <polygon points="694,291.500 757,231 765,230.500 765,240 758,248 749,257 739,266 729,275 719,286 708,294 700,295.500" fill={DARK} />
      <line x1="694" y1="291.500" x2="759" y2="230.500" stroke={EDGE} strokeWidth=".7" />
      {endJoists.map((j) => (
        <Joist key={j.a.join()} {...j} />
      ))}

      <polygon points="321.500,191.500 520,241 592,261 770,311 770,321 592,273 520,253.500 324,201" fill={LIGHT} />
      <polyline points="321.500,191.500 520,241 592,261 770,311" stroke={EDGE} strokeWidth="1.200" fill="none" />
      <polygon points="766,311 828,247 832,246.500 832,256 777,316 770,321" fill={DARK} />
      <line x1="767" y1="311" x2="831" y2="246.500" stroke={EDGE} strokeWidth=".8" />

      <polyline points="317,195.500 320,194.500 324,197 324,203" stroke={EDGE} strokeWidth=".8" fill="none" />
      <polyline points="444,231.500 451,231.500 452,236" stroke={EDGE} strokeWidth=".8" fill="none" />
      <polyline points="591,271.500 600,273 600,278" stroke={EDGE} strokeWidth=".8" fill="none" />
      <polyline points="762,318 771,320 771,312" stroke={EDGE} strokeWidth=".8" fill="none" />

      <Dim a={[264, 179]} b={[429, 106]} text="7700" at={[353.500, 136]} />
      <Dim a={[482, 95]} b={[726, 198]} text="10675" at={[591, 137]} />
      <Dim a={[726, 198]} b={[834, 222.500]} text="2900" at={[779, 206]} />
      <Dim a={[905, 268]} b={[850, 340]} text="4100" at={[879.500, 298]} />
      <Dim a={[276, 219]} b={[286.500, 318]} text="3000" at={[282, 267]} />
      <Dim a={[334, 324]} b={[421, 270]} text="4150" at={[379.500, 292]} />
      <Dim a={[334, 324]} b={[453.500, 365]} text="4250" at={[392, 340.500]} />
      <Dim a={[453.500, 365]} b={[593.500, 411.500]} text="4350" at={[521.500, 384]} />
      <Dim a={[336, 352.500]} b={[749, 497.500]} text="12950" at={[523.500, 414.500]} />
      <Dim a={[593.500, 411.500]} b={[752, 466]} text="4350" at={[671, 434.500]} />
      <Dim a={[426, 244]} b={[524, 271.500]} text="2900" at={[474, 254]} />
      <Dim a={[524, 271.500]} b={[576.500, 287.500]} text="1450" at={[550.500, 275.500]} />
      <Dim a={[576.500, 287.500]} b={[675.500, 315]} text="2550" at={[625.500, 297]} />
      <Dim a={[675.500, 315]} b={[752, 337]} text="1800" at={[713, 322]} />

      <line x1="269" y1="460" x2="252" y2="471" stroke="#6d1a1c" strokeWidth="5" />
      <polygon points="240,481 246,468.500 250,466.500 257,471 255,475" fill="#8f2023" />
      <polygon points="240,481 255,475 257,471 250,473" fill="#661517" />
      <line x1="269" y1="460" x2="286" y2="467" stroke="#1f7f2c" strokeWidth="4.500" />
      <polygon points="301,472.500 289,461.500 285,465 283,472" fill="#2a9a36" />
      <polygon points="301,472.500 283,472 285,468" fill="#1a6e25" />
      <line x1="269.500" y1="461" x2="267" y2="440" stroke="#22238c" strokeWidth="5" />
      <polygon points="265.500,425.500 260.500,440 267,443 273,439.500" fill="#2c2db4" />
      <polygon points="265.500,425.500 267,443 273,439.500" fill="#1d1e80" />
      <text x="264.500" y="422.500" textAnchor="middle" fontSize="8" fill="#4a4ae0">Z</text>
      <text x="234.500" y="487.500" textAnchor="middle" fontSize="8" fill="#d04040">X</text>
      <text x="305.500" y="478" textAnchor="middle" fontSize="8" fill="#34c044">Y</text>
    </svg>
  );
}

export default function App() {
  return (
    <div className="flex min-h-screen flex-col overflow-hidden bg-[#d9dbdf] font-[Lato,sans-serif] text-[6px]">
      <TitleBar />
      <Ribbon />
      <div className="h-[3px] bg-linear-to-b from-[#f4f4f4] to-[#a9abad]" />
      <div className="flex flex-1">
        <SidePanel />
        <main className="flex min-w-0 flex-1 flex-col bg-[#f4f4f4]">
          <h2 className="h-[11px] pt-[4px] pl-[5px] font-['DejaVu_Sans',sans-serif] text-[7px]/[11px] text-[#3a2cb0]">Geometrie</h2>
          <Viewport />
          <div className="mt-auto flex h-[14px] items-start border-t-2 border-[#b9babb] bg-[#e6e6e6] pl-px text-[6px]/[11px]">
            <button type="button" className="h-[11px] w-[33px] bg-white text-[#333]">Geometrie</button>
            <button type="button" className="mr-px h-[11px] w-[38px] bg-linear-to-b from-[#5f6164] to-[#8a8c8f] text-white">Belastingen</button>
            <button type="button" className="h-[11px] w-[36px] bg-linear-to-b from-[#5f6164] to-[#8a8c8f] text-white">Resultaten</button>
          </div>
        </main>
      </div>
      <footer className="flex h-[15px] shrink-0 items-center border-t border-[#777a80] bg-linear-to-b from-[#2b2d34] to-[#3d3f49] font-['Open_Sans',sans-serif] text-[6px]/[14px] text-[#f0f0f0]">
        <span className="w-[79px] border-r border-[#23252b] text-center">Veranderd</span>
        <span className="flex-1 pl-[3px]">C:\Users\BaaijSE\projecten\BaaijSE_intern\civil\helpdesk\2020\796\072010_Luifel_voorzijde.xfr3</span>
        <span className="border-l border-[#b5b5b5] pl-[3px] leading-[12px]">Totaal eigen gewicht:&nbsp; 1295,5 kg</span>
        <label className="ml-[3px] flex items-center gap-[3px] border-l border-[#70727a] pr-[4px] pl-[2px]">
          <span className="relative flex size-[8px]">
            <input type="checkbox" defaultChecked className="peer size-[8px] appearance-none bg-white" />
            <svg viewBox="0 0 8 8" className="pointer-events-none absolute inset-0 hidden size-[8px] peer-checked:block" fill="none" aria-hidden="true">
              <path d="M2 4l1.500 2L6.200 1.800" stroke="#222" />
            </svg>
          </span>
          Licentie gevonden.
        </label>
      </footer>
    </div>
  );
}
